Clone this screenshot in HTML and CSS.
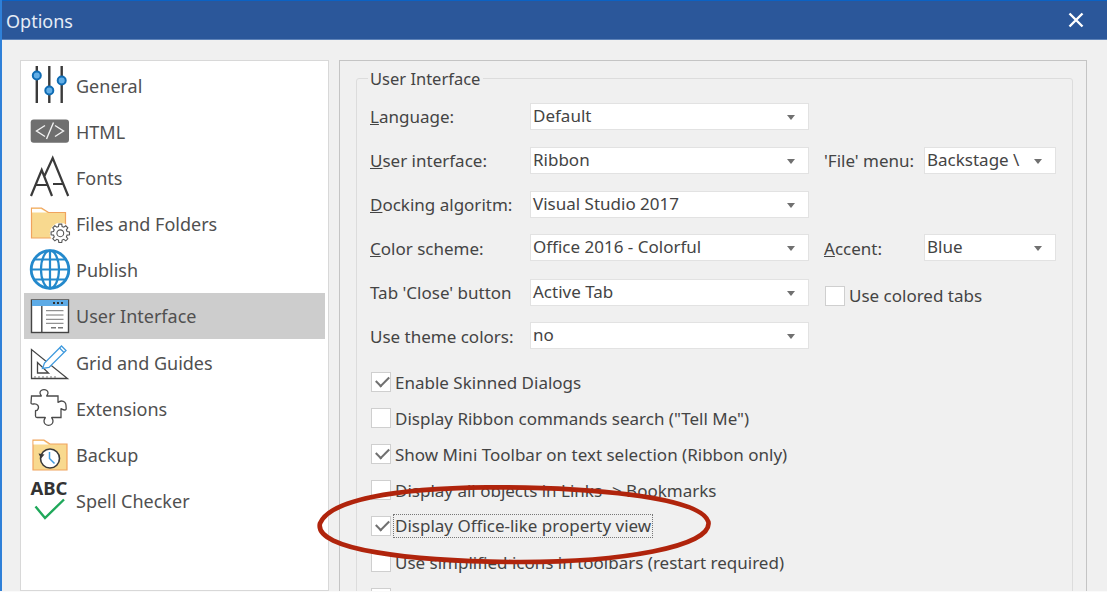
FILE: index.html
```html
<!DOCTYPE html>
<html lang="en">
<head>
<meta charset="utf-8">
<title>Options</title>
<link rel="stylesheet" href="styles.css">
</head>
<body>
<div class="dialog">
  <header class="titlebar">
    <span class="title">Options</span>
    <svg class="close" viewBox="0 0 16 16" aria-label="Close"><path d="M1.5 1.5l13 13M14.500 1.500l-13 13"/></svg>
  </header>
  <div class="content">
    <nav class="nav">
      <div class="item">
        <svg class="icon" viewBox="30 66 40 40">
          <g stroke="#3a3a3a" stroke-width="2.4"><path d="M36.800 66v37M49.300 66v37M61.700 66v37"/></g>
          <g fill="#62aee6" stroke="#0f6cb4" stroke-width="2"><circle cx="36.800" cy="75.500" r="4"/><circle cx="49.300" cy="90.500" r="4"/><circle cx="61.700" cy="80.500" r="4"/></g>
        </svg>
        <span>General</span>
      </div>
      <div class="item">
        <svg class="icon" viewBox="30 112 40 40">
          <rect x="30.700" y="119.500" width="38.300" height="23.300" rx="3" fill="#6f6f6f"/>
          <path d="M45 125.500l-8.500 5.500 8.500 5.500M53.500 122.500l-7 16.500M55 125.500l8.500 5.500-8.500 5.500" fill="none" stroke="#f2f2f2" stroke-width="1.400"/>
        </svg>
        <span>HTML</span>
      </div>
      <div class="item">
        <svg class="icon" viewBox="30 158 40 40">
          <path d="M31 196l10.700-26 10.300 26M35 185h13M44 177l8.700-19 15.500 38M53 184h11" fill="none" stroke="#3a3a3a" stroke-width="2.200"/>
        </svg>
        <span>Fonts</span>
      </div>
      <div class="item">
        <svg class="icon" viewBox="30 204 40 40">
          <path d="M31.500 238V208h10l7 4.500h17V238z" fill="#f8d98f" stroke="#f0a35e" stroke-width="1.200"/>
          <path d="M32 212.500h15l-6-3.500h-9z" fill="#fff"/>
          <g transform="translate(60.300 233.300)" fill="#fff" stroke="#555" stroke-width="1.100">
            <circle r="10.500" stroke="none"/>
            <polygon points="6.760,-1.810 9.190,-1.450 9.190,1.450 6.760,1.810 6.060,3.500 7.520,5.470 5.470,7.520 3.500,6.060 1.810,6.760 1.450,9.190 -1.450,9.190 -1.810,6.760 -3.500,6.060 -5.470,7.520 -7.520,5.470 -6.060,3.500 -6.760,1.810 -9.190,1.450 -9.190,-1.450 -6.760,-1.810 -6.060,-3.500 -7.520,-5.470 -5.470,-7.520 -3.500,-6.060 -1.810,-6.760 -1.450,-9.190 1.450,-9.190 1.810,-6.760 3.500,-6.060 5.470,-7.520 7.520,-5.470 6.060,-3.500"/>
            <circle r="3.400"/>
          </g>
        </svg>
        <span>Files and Folders</span>
      </div>
      <div class="item">
        <svg class="icon" viewBox="30 250 40 40">
          <g fill="none" stroke="#2489cc" stroke-width="2.200">
            <circle cx="50" cy="269.500" r="18.800" stroke-width="2.800"/>
            <ellipse cx="50" cy="269.500" rx="9" ry="18.800"/>
            <path d="M50 250.700v37.600M31.200 269.500h37.600M34 259.500h32M34 279.500h32"/>
          </g>
        </svg>
        <span>Publish</span>
      </div>
      <div class="item selected">
        <svg class="icon" viewBox="30 296 40 40">
          <rect x="31.500" y="300" width="37" height="32.500" fill="#fff" stroke="#444" stroke-width="1.400"/>
          <rect x="32" y="300" width="36" height="6" fill="#5dabe6"/>
          <path d="M53 303h2M57 303h2M61 303h2" stroke="#333" stroke-width="2"/>
          <path d="M41.800 306v26" stroke="#444" stroke-width="1.400"/>
          <path d="M46 310.700h17.500M46 315h17.500M46 319.300h17.500M46 323.300h17.500" stroke="#777" stroke-width="1"/>
          <path d="M51 327.800h5M58 327.800h5" stroke="#777" stroke-width="1.600"/>
        </svg>
        <span>User Interface</span>
      </div>
      <div class="item">
        <svg class="icon" viewBox="30 343 40 40">
          <path d="M31.500 349.500v29h36zM37.500 362.500v10.500h11z" fill="none" stroke="#444" stroke-width="1.300"/>
          <path d="M35 376v2M39 376v2M43 376v2M47 376v2M51 376v2M55 376v2" stroke="#777" stroke-width="1"/>
          <path d="M42.500 368.500l2-5.500 17-17 4.500 4.500-17 17z" fill="#fff" stroke="#3f9ade" stroke-width="1.300"/>
          <path d="M59.500 348l4.500 4.500" stroke="#3f9ade" stroke-width="1.300"/>
        </svg>
        <span>Grid and Guides</span>
      </div>
      <div class="item">
        <svg class="icon" viewBox="30 389 40 40">
          <path d="M31.500 396h9.500c1 0-1-1.500-1-3 0-2 2-3.300 4-3.300s4 1.300 4 3.300c0 1.500-2 3-1 3h11v6c0 1 1.500-1 3.500-1 2.500 0 4.500 2 4.500 4.500S67 410 64.500 410c-2 0-3.500-2-3.500-1v8.500H52c-1 0 1 1.500 1 3.500 0 2.500-2 4.300-4.500 4.300S44 423.500 44 421c0-2 2-3.500 1-3.500h-8c-1 0-1.500-.5-1.500-1.500v-5c0-1 1.500 0 2-1 1-1.500 1.500-3 .5-4.500-1-1.200-3-1.800-4.500-1.500-1 .2-2.500 0-2.500-1z" fill="#fff" stroke="#4a4a4a" stroke-width="1.300"/>
        </svg>
        <span>Extensions</span>
      </div>
      <div class="item">
        <svg class="icon" viewBox="30 435 40 40">
          <path d="M33 470v-30h11l6 4h17v26z" fill="#f8d98f" stroke="#f0a35e" stroke-width="1.200"/>
          <path d="M33.500 444.500h15l-5-3.500H33.500z" fill="#fff"/>
          <circle cx="50" cy="458.500" r="9.500" fill="#fff" stroke="#3a3a3a" stroke-width="1.600"/>
          <path d="M38.500 453.500l2.500 5 3.500-4z" fill="#3a3a3a"/>
          <path d="M49.500 452v6.500l5 5" fill="none" stroke="#3f9ade" stroke-width="1.500"/>
        </svg>
        <span>Backup</span>
      </div>
      <div class="item">
        <svg class="icon" viewBox="30 481 40 40">
          <text class="abc" x="30.500" y="495">ABC</text>
          <path d="M35.500 506.500l9.500 11.500 19-18.500" fill="none" stroke="#1fa85a" stroke-width="2.400"/>
        </svg>
        <span>Spell Checker</span>
      </div>
    </nav>
    <main class="panel">
      <fieldset class="group">
        <legend class="legend">User Interface</legend>
        <div class="form">
          <label class="lbl"><u>L</u>anguage:</label>
          <div class="select"><span>Default</span></div>
          <span></span><span></span>

          <label class="lbl"><u>U</u>ser interface:</label>
          <div class="select"><span>Ribbon</span></div>
          <label class="lbl side">'File' menu:</label>
          <div class="select narrow"><span>Backstage \</span></div>

          <label class="lbl"><u>D</u>ocking algoritm:</label>
          <div class="select"><span>Visual Studio 2017</span></div>
          <span></span><span></span>

          <label class="lbl low"><u>C</u>olor scheme:</label>
          <div class="select"><span>Office 2016 - Colorful</span></div>
          <label class="lbl low side"><u>A</u>ccent:</label>
          <div class="select narrow"><span>Blue</span></div>

          <label class="lbl">Tab 'Close' button</label>
          <div class="select"><span>Active Tab</span></div>
          <div class="check tabs"><span class="box"></span><span>Use colored tabs</span></div>

          <label class="lbl low">Use theme colors:</label>
          <div class="select"><span>no</span></div>
          <span></span><span></span>
        </div>
        <div class="checks">
          <div class="check"><span class="box on"></span><span>Enable Skinned Dialogs</span></div>
          <div class="check"><span class="box"></span><span>Display Ribbon commands search ("Tell Me")</span></div>
          <div class="check"><span class="box on"></span><span>Show Mini Toolbar on text selection (Ribbon only)</span></div>
          <div class="check"><span class="box"></span><span>Display all objects in Links -&gt; Bookmarks</span></div>
          <div class="check"><span class="box on"></span><span class="focus">Display Office-like property view</span></div>
          <div class="check"><span class="box"></span><span>Use simplified icons in toolbars (restart required)</span></div>
          <div class="check"><span class="box"></span></div>
        </div>
      </fieldset>
    </main>
  </div>
  <svg class="oval" viewBox="0 0 1500 696">
    <path d="M60 490C90 420 280 385 560 382C860 380 1200 410 1225 485C1240 560 960 608 640 606C340 604 40 570 60 490z"/>
  </svg>
</div>
</body>
</html>
```
FILE: styles.css
```css
* { box-sizing: border-box; }
html, body { margin: 0; height: 592px; overflow: hidden; background: #fafafa; }
body { font-family: "Noto Sans", sans-serif; font-size: 17px; color: #444; }

.dialog { position: relative; height: 591px; display: flex; flex-direction: column; border-left: 2px solid #2f80d8; background: #f0f0f0; overflow: hidden; }

.titlebar { height: 40px; flex: none; margin-left: -2px; display: flex; align-items: center; justify-content: space-between; padding: 2px 23px 0 6px; background: #2b579a; border-top: 1px solid #0b62c4; border-bottom: 1px solid #5f83b8; }
.title { color: #e6ecf6; font-size: 18px; margin-top: -1px; }
.close { width: 16px; height: 16px; margin-top: -3px; fill: none; stroke: #fff; stroke-width: 2.400; }

.content { flex: 1; display: flex; align-items: stretch; padding: 20px 0 0 18px; min-height: 0; }

.nav { width: 309px; flex: none; padding: 2px 3px 0; background: #fff; border: 1px solid #d8d8d8; }
.item { height: 46px; display: flex; align-items: center; gap: 6px; padding-left: 6px; color: #505050; font-size: 18px; }
.item.selected { background: #cdcdcd; margin-bottom: 1px; }
.icon { width: 40px; height: 40px; flex: none; overflow: visible; }
.abc { font-family: "Noto Sans", sans-serif; font-size: 18.500px; font-weight: 700; fill: #333; }

.panel { width: 748px; flex: none; margin-left: 10px; padding: 6px 13px 0 16px; border: 1px solid #c4c4c4; border-bottom: 0; overflow: hidden; }
.group { height: 700px; margin: 0; padding: 13px 12px 0 13px; border: 1px solid #dcdcdc; border-radius: 3px; min-width: 0; }
.legend { padding: 0 3px 0 2px; margin-left: -2px; font-size: 16.500px; color: #444; }

.form { display: grid; grid-template-columns: 160px 279px 115px 132px; grid-template-rows: 44px 44px 43px 45px 43px 44px; }
.lbl { align-self: start; padding-top: 2px; white-space: nowrap; }
.lbl.low { padding-top: 3px; }
.side { margin-left: 15px; }
.select { position: relative; height: 27px; padding: 0 32px 0 2px; background: #fff; border: 1px solid #e2e2e2; white-space: nowrap; overflow: hidden; }
.select::after { content: ""; position: absolute; top: 11px; right: 13px; border: 4px solid transparent; border-top: 5px solid #707070; border-bottom: 0; }

.check { display: flex; align-items: center; height: 36px; gap: 4px; white-space: nowrap; }
.tabs { grid-column: 3 / span 2; height: 27px; margin-top: 3px; padding-left: 16px; }
.box { position: relative; width: 20px; height: 20px; flex: none; background: #fff; border: 1px solid #cfcfcf; }
.box.on::after { content: ""; position: absolute; left: 4px; top: 3px; width: 11px; height: 6px; border-left: 2.500px solid #707070; border-bottom: 2.500px solid #707070; transform: rotate(-45deg); }
.checks { margin-top: -2px; padding-left: 1px; }
.focus { outline: 1px dotted #777; padding: 0 1px; margin-left: -1px; line-height: 22px; }

.oval { position: absolute; left: 298px; top: 360px; width: 500px; height: 232px; fill: none; stroke: #b0240c; stroke-width: 14; pointer-events: none; }
```
